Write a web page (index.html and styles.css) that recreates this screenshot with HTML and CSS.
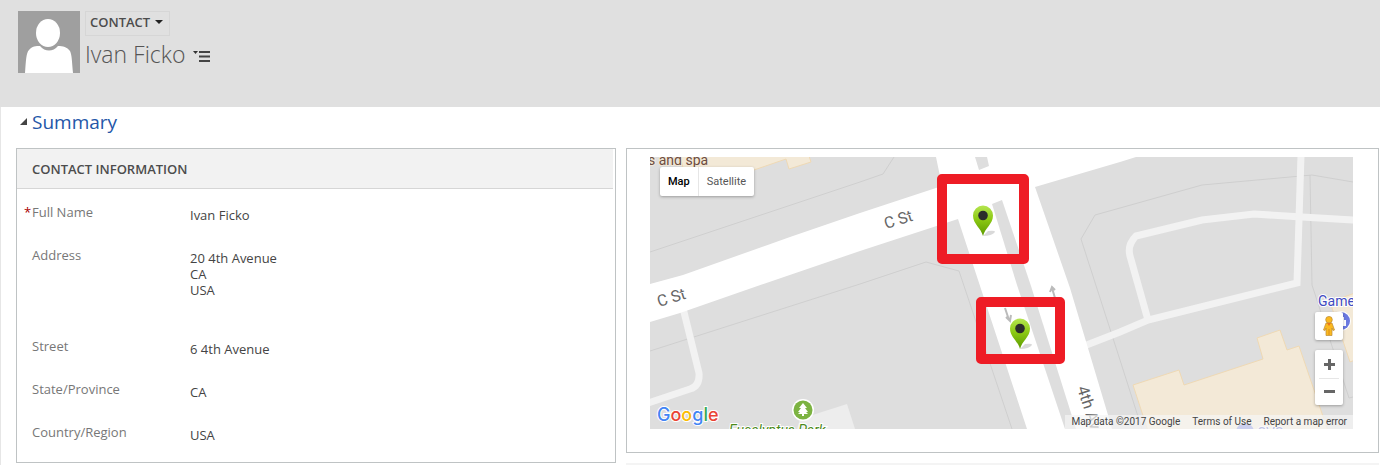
FILE: index.html
```html
<!DOCTYPE html>
<html lang="en">
<head>
    <meta charset="UTF-8">
    <meta name="viewport" content="width=device-width, initial-scale=1.0">
    <title>Contact: Ivan Ficko</title>
    <link rel="stylesheet" href="styles.css">
</head>
<body>

<header class="page-header">
    <svg class="avatar" viewBox="0 0 62 62" aria-hidden="true">
        <rect width="62" height="62" fill="#9f9f9f"/>
        <path d="M7 62C8 50 8 42 11 39C14 35 18 35 22 35C27 41 35 41 40 35C45 35 49 36 52 40C54 44 54 52 55 62Z" fill="#fff"/>
        <ellipse cx="30" cy="22" rx="12" ry="14" fill="#fff"/>
    </svg>
    <div class="record">
        <button class="record-type" type="button">CONTACT <span class="caret"></span></button>
        <div class="record-title">
            <h1>Ivan Ficko</h1>
            <button class="record-menu" type="button" aria-label="Record menu">
                <svg width="18" height="11" viewBox="0 0 18 11">
                    <path d="M0 0H5L2.500 3Z" fill="#333"/>
                    <path d="M6 1H17M6 5.500H17M6 10H17" stroke="#444" stroke-width="2"/>
                </svg>
            </button>
        </div>
    </div>
</header>

<main>
    <h2 class="section-title"><span class="expander"></span>Summary</h2>

    <div class="columns">
        <section class="card">
            <h3>CONTACT INFORMATION</h3>
            <dl class="fields">
                <div class="field">
                    <dt class="required">Full Name</dt>
                    <dd>Ivan Ficko</dd>
                </div>
                <div class="field field-tall">
                    <dt>Address</dt>
                    <dd>20 4th Avenue<br>CA<br>USA</dd>
                </div>
                <div class="field">
                    <dt>Street</dt>
                    <dd>6 4th Avenue</dd>
                </div>
                <div class="field">
                    <dt>State/Province</dt>
                    <dd>CA</dd>
                </div>
                <div class="field">
                    <dt>Country/Region</dt>
                    <dd>USA</dd>
                </div>
            </dl>
        </section>

        <div class="side">
            <section class="card map-card">
                <div class="map">
                    <svg class="map-canvas" viewBox="650 157 703 272" preserveAspectRatio="xMidYMid slice">
                        <defs>
                            <linearGradient id="pinFill" x1="0" y1="0" x2="0" y2="1">
                                <stop offset="0" stop-color="#b5e550"/>
                                <stop offset="0.450" stop-color="#8cc914"/>
                                <stop offset="1" stop-color="#5c9a00"/>
                            </linearGradient>
                            <g id="pin">
                                <path d="M0 0L5 -5Q12 -6 12 -4Q9 0 0 0Z" fill="#000" opacity="0.150"/>
                                <path d="M0 0C-2 -8 -10 -12 -10 -20.500A10 10 0 0 1 10 -20.500C10 -12 2 -8 0 0Z" fill="url(#pinFill)"/>
                                <circle cy="-20.500" r="4.800" fill="#2b2b2b"/>
                            </g>
                        </defs>

                        <rect x="650" y="157" width="703" height="272" fill="#dedede"/>

                        <!-- parcels -->
                        <g class="parcels">
                            <path d="M650 252L860 182L883 174L894 157"/>
                            <path d="M650 351L860 284L926 262L959 271L1012 429"/>
                            <path d="M1353 182L1312 175L1202 185L1120 208L1095 215L1081 239L1120 360L1142 429"/>
                            <path d="M1310 175L1312 285L1349 398L1353 397"/>
                        </g>

                        <!-- buildings -->
                        <g class="buildings">
                            <path d="M680 156L688 187L754 170L786 159L789 169L811 162L809 156Z"/>
                            <path d="M1133 385L1179 370L1184 385L1263 359L1257 338L1280 330L1287 350L1299 346L1328 431H1148Z"/>
                            <path d="M1355 293L1330 302L1350 362L1355 360Z"/>
                        </g>
                        <path d="M800 419L847 404L855 429H797Z" fill="#ededed"/>

                        <!-- small roads -->
                        <g class="lanes">
                            <path d="M683 308L699 373Q700 386 690 389L645 404"/>
                            <path d="M1355 220L1302 217L1254 214L1202 220L1136 236Q1127 245 1130 256L1148 320"/>
                            <path d="M1301 155L1297 283L1148 320L1120 332L1084 346"/>
                        </g>

                        <!-- main roads -->
                        <path d="M650 284L683 275L790 237L860 213L942 186L936 157H1136L1120 162L1035 187L1070 288L1108 415L1112 429H1027L958 219L860 251L746 290L680 313L650 322Z" fill="#fff"/>
                        <path d="M975 157H987L989 166L979 170Z" fill="#dedede"/>
                        <path d="M992 204L1002 200L1031 286L1071 413L1076 429H1065L1017 285Z" fill="#dedede"/>
                        <g class="arrows">
                            <path d="M1005 308L1009 320M1006 317L1010 321L1011 315"/>
                            <path d="M1055 298L1052 288M1050 292L1052 287L1055 290"/>
                        </g>

                        <g class="street">
                            <text transform="translate(886 229) rotate(-17)">C St</text>
                            <text transform="translate(659 307) rotate(-17)">C St</text>
                            <text transform="translate(1077 388) rotate(72)">4th Ave</text>
                        </g>
                        <text class="place" x="648" y="165">s and spa</text>
                        <text class="shop" x="1318" y="306">Game</text>
                        <circle cx="1341" cy="321" r="10" fill="#fff"/>
                        <circle cx="1341" cy="321" r="9" fill="#6b79e0"/>
                        <path d="M1338 320H1346V326H1338ZM1341 320V317H1344V320" fill="#fff"/>
                        <circle cx="1245" cy="432" r="9" fill="#6b79e0"/>
                        <text class="shop" x="1257" y="438">CVS</text>

                        <text class="park" x="729" y="435">Eucalyptus Park</text>
                        <circle cx="803" cy="410" r="11" fill="#fff"/>
                        <circle cx="803" cy="410" r="9.500" fill="#7cb342"/>
                        <path d="M803 403L807 408H805L808 412H806L808 414H804V416H802V414H798L800 412H798L801 408H799Z" fill="#fff"/>

                        <rect class="marker-box" x="942" y="179" width="82" height="80"/>
                        <rect class="marker-box" x="981" y="302" width="79" height="57"/>
                        <use href="#pin" x="983" y="236"/>
                        <use href="#pin" x="1020" y="349"/>
                    </svg>

                    <div class="map-types">
                        <button class="active" type="button">Map</button>
                        <button type="button">Satellite</button>
                    </div>

                    <div class="map-controls">
                        <button class="pegman" type="button" aria-label="Street View">
                            <svg width="12" height="20" viewBox="0 0 12 20">
                                <path d="M3 7H9L11.500 14L10 14.500L9 12V19.500H3V12L2 14.500L0.500 14Z" fill="#fbb91f" stroke="#b78b3a" stroke-width="0.700"/>
                                <circle cx="6" cy="3.700" r="3.300" fill="#fbb91f" stroke="#b78b3a" stroke-width="0.700"/>
                                <path d="M4 7H8L6 10Z" fill="#e8751a"/>
                                <path d="M6 13V19" stroke="#d98a1a"/>
                            </svg>
                        </button>
                        <div class="zoom">
                            <button type="button" aria-label="Zoom in">
                                <svg width="11" height="11" viewBox="0 0 11 11"><path d="M0 5.500H11M5.500 0V11" stroke="#666" stroke-width="3"/></svg>
                            </button>
                            <button type="button" aria-label="Zoom out">
                                <svg width="11" height="11" viewBox="0 0 11 11"><path d="M0 5.500H11" stroke="#666" stroke-width="3"/></svg>
                            </button>
                        </div>
                    </div>

                    <svg class="google" width="66" height="26" viewBox="0 0 66 26" role="img" aria-label="Google">
                        <text x="1" y="18"><tspan fill="#4285f4">G</tspan><tspan fill="#ea4335">o</tspan><tspan fill="#fbbc05">o</tspan><tspan fill="#4285f4">g</tspan><tspan fill="#34a853">l</tspan><tspan fill="#ea4335">e</tspan></text>
                    </svg>

                    <div class="map-legal">
                        <span>Map data ©2017 Google</span>
                        <a href="#">Terms of Use</a>
                        <a href="#">Report a map error</a>
                    </div>
                </div>
            </section>
            <div class="next-section"></div>
        </div>
    </div>
</main>

</body>
</html>
```
FILE: styles.css
```css
* {
    box-sizing: border-box;
}

body {
    margin: 0;
    font-family: "Segoe UI", "Open Sans", "Noto Sans", sans-serif;
    font-size: 13px;
    color: #444;
    background-color: #fff;
}

h1, h2, h3, dl, dd {
    margin: 0;
    font-weight: normal;
}

button {
    padding: 0;
    border: none;
    background: none;
    font-family: inherit;
    cursor: pointer;
}

svg {
    display: block;
}

.page-header {
    display: flex;
    gap: 5px;
    height: 107px;
    padding: 11px 18px;
    background-color: #e0e0e0;
}

.avatar {
    width: 62px;
    height: 62px;
}

.record-type {
    display: flex;
    align-items: center;
    gap: 5px;
    height: 25px;
    padding: 0 6px 3px 4px;
    border: 1px solid #d6d6d6;
    font-size: 13px;
    font-weight: 600;
    color: #4c4c4c;
}

.caret {
    border: 4px solid transparent;
    border-top-color: #222;
    border-bottom: none;
}

.record-title {
    display: flex;
    align-items: center;
    gap: 8px;
}

.record-title h1 {
    font-size: 23px;
    font-weight: 300;
    line-height: 37px;
    color: #555;
}

.record-menu {
    padding-top: 3px;
}

main {
    padding: 0 1px 0 15px;
    border-left: 1px solid #e6e6e6;
}

.section-title {
    display: flex;
    align-items: center;
    gap: 5px;
    height: 41px;
    padding: 0 0 12px 4px;
    font-size: 19px;
    color: #2456a8;
}

.expander {
    border-left: 7px solid transparent;
    border-bottom: 7px solid #444;
}

.columns {
    display: grid;
    grid-template-columns: 600fr 753fr;
    gap: 10px;
    align-items: start;
}

.card {
    border: 1px solid #bfc3c4;
}

.card h3 {
    height: 40px;
    margin-right: 2px;
    padding-left: 15px;
    border-bottom: 1px solid #d6d6d6;
    background-color: #f2f2f2;
    font-size: 13px;
    font-weight: 600;
    line-height: 40px;
    color: #4c4c4c;
}

.fields {
    display: grid;
    gap: 24px;
    padding: 15px 15px 19px;
    line-height: 16px;
}

.field {
    display: grid;
    grid-template-columns: 158px 1fr;
}

.field-tall {
    min-height: 67px;
}

.field dt {
    color: #777;
}

.field dd {
    padding-top: 3px;
}

.required::before {
    content: "*";
    float: left;
    margin-left: -8px;
    color: #a00;
}

.map-card {
    padding: 8px 25px 23px 23px;
}

.map {
    position: relative;
    height: 272px;
    overflow: hidden;
    font-family: Roboto, Arial, sans-serif;
}

.map-canvas {
    width: 100%;
    height: 100%;
}

.parcels path {
    fill: none;
    stroke: #cfcfcf;
}

.buildings path {
    fill: #f3e9d7;
    stroke: #efd9b4;
}

.lanes path {
    fill: none;
    stroke: #f2f2f2;
    stroke-width: 7px;
}

.arrows path {
    fill: none;
    stroke: #bbb;
    stroke-width: 2px;
}

.street {
    font-size: 16px;
    fill: #666;
}

.place, .shop, .park {
    font-size: 14px;
    stroke: #fff;
    stroke-width: 2px;
    paint-order: stroke;
}

.place {
    fill: #6d4c41;
    stroke: #f3e9d7;
}

.shop {
    fill: #3f4bc0;
}

.park {
    fill: #4c8a1b;
    font-style: italic;
}

.marker-box {
    fill: none;
    stroke: #ee1c25;
    stroke-width: 10px;
    stroke-linejoin: round;
}

.map-types {
    position: absolute;
    top: 10px;
    left: 10px;
    display: flex;
    border-radius: 2px;
    background-color: #fff;
    box-shadow: 0 1px 3px rgba(0, 0, 0, 0.3);
}

.map-types button {
    height: 29px;
    padding: 0 8px;
    font-size: 11px;
    color: #565656;
}

.map-types button + button {
    border-left: 1px solid #e6e6e6;
}

.map-types .active {
    font-weight: 500;
    color: #000;
}

.map-controls {
    position: absolute;
    right: 10px;
    bottom: 24px;
    display: grid;
    gap: 10px;
    width: 28px;
}

.pegman, .zoom {
    border-radius: 2px;
    background-color: #fff;
    box-shadow: 0 1px 3px rgba(0, 0, 0, 0.3);
}

.pegman, .zoom button {
    display: grid;
    place-items: center;
    width: 28px;
    height: 28px;
}

.zoom button + button {
    height: 27px;
    background: linear-gradient(#e6e6e6, #e6e6e6) center top / 20px 1px no-repeat;
}

.google {
    position: absolute;
    left: 6px;
    bottom: 0;
}

.google text {
    font-family: Inter, sans-serif;
    font-size: 18px;
    font-weight: 500;
    stroke: #fff;
    stroke-width: 2px;
    paint-order: stroke;
}

.map-legal {
    position: absolute;
    right: 0;
    bottom: 0;
    display: flex;
    background-color: rgba(245, 245, 245, 0.7);
    font-size: 10px;
    line-height: 14px;
}

.map-legal > * {
    padding: 0 6px;
    color: #444;
    text-decoration: none;
}

.next-section {
    height: 2px;
    margin-top: 10px;
    background-color: #f4f4f4;
}
```
